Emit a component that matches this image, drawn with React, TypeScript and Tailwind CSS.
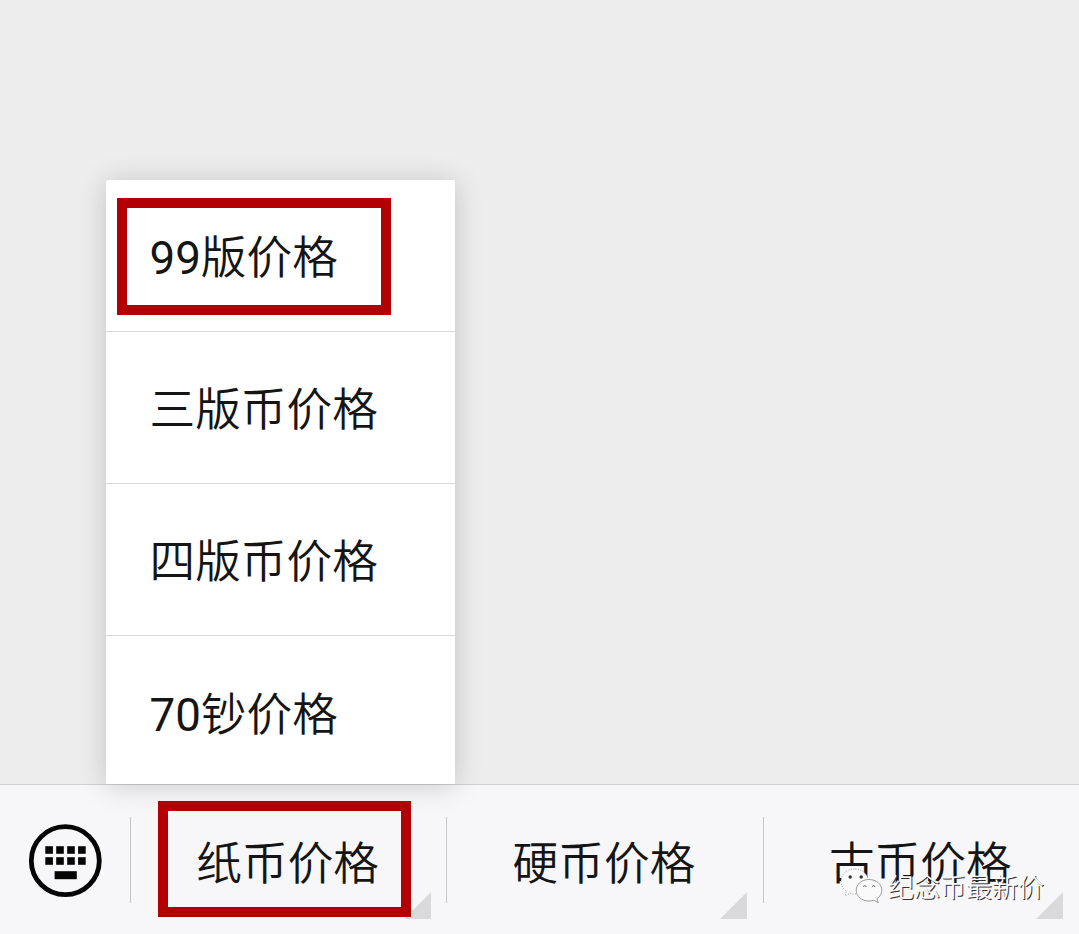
import { clsx } from "clsx"

const menuItems = [
  { digits: "99", text: "版价格" },
  { digits: "", text: "三版币价格" },
  { digits: "", text: "四版币价格" },
  { digits: "70", text: "钞价格" },
]
const tabs = ["纸币价格", "硬币价格", "古币价格"]

const labelClass =
  "whitespace-nowrap font-['Roboto','Noto_Sans_CJK_SC',sans-serif] text-[45.7px] leading-none font-[350] text-[#151515]"

function KeyboardIcon() {
  return (
    <svg width="74" height="74" viewBox="0 0 74 74" aria-hidden="true">
      <circle cx="37.3" cy="36.7" r="34" fill="none" stroke="#050505" strokeWidth="4.8" />
      {[22.2, 33.2].map((y) =>
        [17.3, 28.2, 39.2, 50.1].map((x) => (
          <rect key={`${x}-${y}`} x={x} y={y} width="7.6" height="7.6" fill="#050505" />
        ))
      )}
      <rect x="26.6" y="47.2" width="22.2" height="8" fill="#050505" />
    </svg>
  )
}

function PopupMenu() {
  return (
    <div className="relative z-10 ml-[106px] flex h-[604px] w-[349px] flex-col rounded-t-[2px] bg-white shadow-[0_2px_28px_rgba(0,0,0,0.18)]">
      {menuItems.map(({ digits, text }, i) => (
        <div
          key={text}
          className={clsx(
            "relative flex h-[152px] shrink-0 items-center pt-[7px] pl-[43.5px]",
            i < menuItems.length - 1 && "border-b border-[#d5d8d8]"
          )}
        >
          <span className={labelClass}>
            {digits && <span className="font-normal">{digits}</span>}
            {text}
          </span>
          {i === 0 && (
            <div className="absolute top-[18px] left-[11px] h-[117px] w-[274px] border-[10px] border-[#b30004]" />
          )}
        </div>
      ))}
    </div>
  )
}

function Watermark() {
  return (
    <div className="absolute top-[82px] left-[840px] flex items-center">
      <svg width="44" height="38" viewBox="0 0 44 38" aria-hidden="true">
        <g fill="#fbfafb" stroke="#777" strokeWidth="0.7">
          <path d="M14.500 2C7 2 1 7.400 1 14.500c0 4 2 7.500 5.400 9.800L5 29l5.200-2.700c2 .6 4.200.8 6.300.6C27 26 29 20 28.500 14 28 7 22 2 14.500 2z" strokeDasharray="1 1.500" />
          <path d="M29 12.500c-7.200 0-12.800 4.700-12.800 10.700S21.800 34 29 34c1.700 0 3.300-.3 4.800-.8l4.400 2.500-1.200-4c3-2 4.800-5 4.800-8.500 0-6-5.600-10.700-12.800-10.700z" />
        </g>
        <circle cx="10.200" cy="10" r="1.700" fill="#333" />
        <circle cx="21.200" cy="10" r="1.700" fill="#333" />
        <path d="M23.200 19.500q1.600-1.600 3.200 0M32 19.500q1.600-1.600 3.200 0" fill="none" stroke="#555" />
      </svg>
      <span className="ml-[4px] font-['Noto_Sans_CJK_SC',sans-serif] text-[26px] leading-none font-[350] whitespace-nowrap text-[#fafafa] [text-shadow:1px_1px_0.5px_#333]">
        纪念币最新价
      </span>
    </div>
  )
}

export default function App() {
  return (
    <div className="flex h-[934px] w-[1079px] flex-col overflow-hidden bg-[#ededed]">
      <main className="flex h-[784px] shrink-0 flex-col justify-end">
        <PopupMenu />
      </main>
      <nav className="relative flex h-[150px] border-t border-[#cfcfcf] bg-[#f7f6f8]">
        <div className="flex w-[130px] shrink-0 justify-center pt-[39px]">
          <KeyboardIcon />
        </div>
        {tabs.map((tab, i) => (
          <div key={tab} className="relative flex flex-1 justify-center">
            <div className="absolute top-8 left-0 h-[86px] w-px bg-[#c6c6c8]" />
            <span className={clsx(labelClass, "pt-[57px] pr-px")}>{tab}</span>
            <svg className="absolute top-[107px] right-[15.5px]" width="27" height="27" aria-hidden="true">
              <path d="M27 0v27H0z" fill="#d9d9db" />
            </svg>
            {i === 0 && (
              <div className="absolute top-4 left-7 z-20 h-[116px] w-[253px] border-[10px] border-[#b30004]" />
            )}
          </div>
        ))}
        <Watermark />
      </nav>
    </div>
  )
}
